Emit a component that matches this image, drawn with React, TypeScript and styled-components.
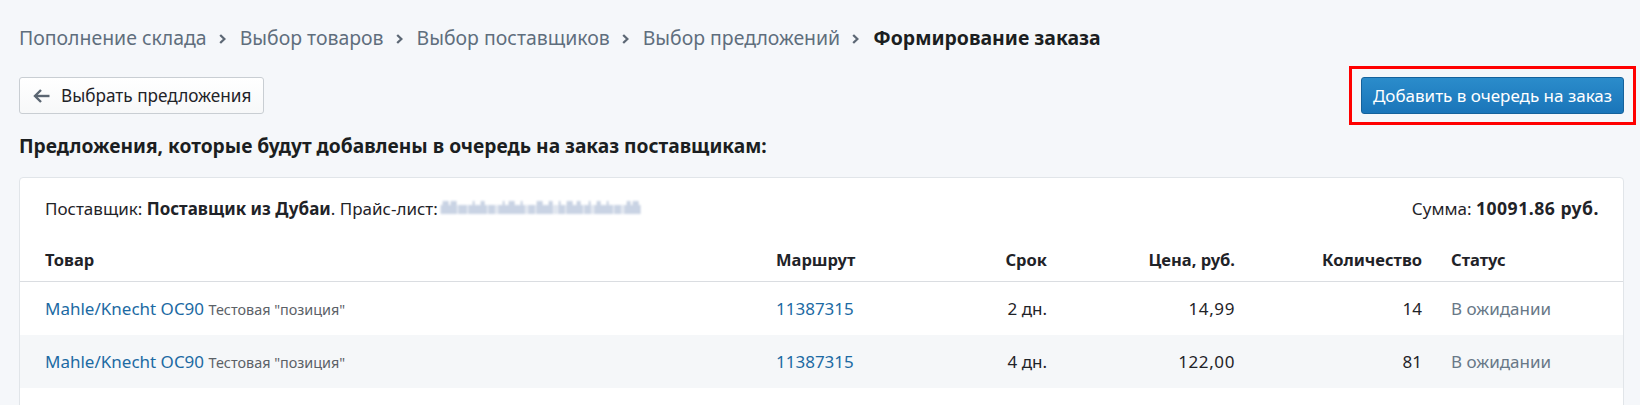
import React from "react";
import styled, { createGlobalStyle } from "styled-components";

const GlobalStyle = createGlobalStyle`
  html, body {
    margin: 0;
    padding: 0;
    background: #f5f7fa;
    font-family: "Noto Sans", "Open Sans", sans-serif;
    color: #212529;
  }
  * { box-sizing: border-box; }
`;

const Page = styled.div`
  padding: 26px 16px 0 19px;
`;

const Breadcrumbs = styled.nav`
  display: flex;
  align-items: center;
  height: 24px;
  font-size: 19.45px;
  line-height: 24px;
`;

const Crumb = styled.a<{ $current?: boolean }>`
  color: ${(p) => (p.$current ? "#1b1e21" : "#5f6e7d")};
  font-weight: ${(p) => (p.$current ? 700 : 400)};
  text-decoration: none;
  white-space: nowrap;
`;

const Sep = styled.span`
  display: inline-flex;
  align-items: center;
  margin: 1px 14px 0 12px;
  color: #5d6875;
`;

const Toolbar = styled.div`
  display: flex;
  justify-content: space-between;
  align-items: center;
  margin-top: 27px;
`;

const BackButton = styled.button`
  display: inline-flex;
  align-items: center;
  gap: 11px;
  height: 37px;
  padding: 0 12px 0 13px;
  border: 1px solid #c9ced3;
  border-radius: 3px;
  background: linear-gradient(#ffffff, #f7f8f9);
  font-family: inherit;
  font-size: 17.2px;
  color: #1f2328;
  cursor: pointer;
`;

const Highlight = styled.div`
  position: relative;
  &::after {
    content: "";
    position: absolute;
    inset: -11px -12px;
    border: 3px solid #ff0000;
    pointer-events: none;
  }
`;

const PrimaryButton = styled.button`
  display: inline-flex;
  align-items: center;
  justify-content: center;
  width: 263px;
  height: 37px;
  border: 1px solid #15629c;
  border-radius: 3px;
  background: linear-gradient(#2b8ccb, #1a75b9);
  color: #ffffff;
  font-family: inherit;
  font-size: 17px;
  cursor: pointer;
`;

const Heading = styled.h2`
  margin: 20px 0 0;
  font-size: 19.2px;
  line-height: 24px;
  font-weight: 700;
  color: #1b1e21;
`;

const Card = styled.section`
  margin-top: 19px;
  background: #ffffff;
  border: 1px solid #e1e5e9;
  border-radius: 4px;
  padding-bottom: 20px;
`;

const SupplierBar = styled.div`
  display: flex;
  justify-content: space-between;
  align-items: center;
  height: 60px;
  padding: 0 24px 0 25px;
  font-size: 17px;
  color: #1f2328;
`;

const Amount = styled.b`
  font-size: 17.6px;
  letter-spacing: 0.5px;
`;

const Redacted = styled.svg`
  display: inline-block;
  vertical-align: middle;
  margin-left: 1px;
  margin-top: -3px;
  filter: blur(1.3px);
`;

const Row = styled.div<{ $head?: boolean; $alt?: boolean }>`
  display: grid;
  grid-template-columns: 702px 124px 118px 159px 158px 1fr;
  column-gap: 29px;
  align-items: center;
  height: ${(p) => (p.$head ? "44px" : "53px")};
  padding: 0 24px 0 25px;
  background: ${(p) => (p.$alt ? "#f5f7f9" : "#ffffff")};
  border-bottom: ${(p) => (p.$head ? "1px solid #dadde1" : "none")};
  font-size: ${(p) => (p.$head ? "16.5px" : "17px")};
  font-weight: ${(p) => (p.$head ? 700 : 400)};
  color: #1f2328;
`;

const Cell = styled.div<{ $right?: boolean; $num?: boolean }>`
  text-align: ${(p) => (p.$right ? "right" : "left")};
  letter-spacing: ${(p) => (p.$num ? "0.6px" : "normal")};
  white-space: nowrap;
`;

const Link = styled.a`
  color: #1c6aa3;
  text-decoration: none;
`;

const Note = styled.span`
  font-size: 14.4px;
  color: #5b6167;
`;

const Status = styled.span`
  color: #687887;
`;

const Chevron = () => (
  <svg width="7" height="10" viewBox="0 0 7 10">
    <polyline points="1.2,1 5.4,5 1.2,9" fill="none" stroke="currentColor" strokeWidth="2.3" />
  </svg>
);

const ArrowLeft = () => (
  <svg width="17" height="14" viewBox="0 0 17 14">
    <line x1="2" y1="7" x2="16.5" y2="7" stroke="#5b6672" strokeWidth="2.4" />
    <polyline points="8,1 2,7 8,13" fill="none" stroke="#5b6672" strokeWidth="2.4" />
  </svg>
);

const bars = Array.from({ length: 100 }, (_, i) => {
  const v = (Math.sin(i * 1.3) + Math.sin(i * 0.41) * 0.9 + Math.sin(i * 2.9) * 0.5 + 2.4) / 4.8;
  return v > 0.6 ? "tall" : v > 0.3 ? "mid" : "low";
});

const RedactedName = () => (
  <Redacted width="206" height="20" viewBox="0 0 206 20">
    {bars.map((b, i) => (
      <rect
        key={i}
        x={2 + i * 2}
        y={b === "tall" ? 3 : 7}
        width="1.2"
        height={b === "tall" ? 13 : 9}
        fill="#7f97bd"
        opacity={b === "low" ? 0.4 : 0.7}
      />
    ))}
  </Redacted>
);

const rows = [
  { route: "11387315", term: "2 дн.", price: "14,99", qty: "14" },
  { route: "11387315", term: "4 дн.", price: "122,00", qty: "81" },
];

const crumbs = ["Пополнение склада", "Выбор товаров", "Выбор поставщиков", "Выбор предложений"];

export default function App() {
  return (
    <>
      <GlobalStyle />
      <Page>
        <Breadcrumbs>
          {crumbs.map((c) => (
            <React.Fragment key={c}>
              <Crumb href="#">{c}</Crumb>
              <Sep>
                <Chevron />
              </Sep>
            </React.Fragment>
          ))}
          <Crumb $current>Формирование заказа</Crumb>
        </Breadcrumbs>

        <Toolbar>
          <BackButton>
            <ArrowLeft />
            Выбрать предложения
          </BackButton>
          <Highlight>
            <PrimaryButton>Добавить в очередь на заказ</PrimaryButton>
          </Highlight>
        </Toolbar>

        <Heading>Предложения, которые будут добавлены в очередь на заказ поставщикам:</Heading>

        <Card>
          <SupplierBar>
            <span>
              Поставщик: <b>Поставщик из Дубаи</b>. Прайс-лист:
              <RedactedName />
            </span>
            <span>
              Сумма: <Amount>10091.86 руб.</Amount>
            </span>
          </SupplierBar>
          <Row $head>
            <Cell>Товар</Cell>
            <Cell>Маршрут</Cell>
            <Cell $right>Срок</Cell>
            <Cell $right>Цена, руб.</Cell>
            <Cell $right>Количество</Cell>
            <Cell>Статус</Cell>
          </Row>
          {rows.map((r, i) => (
            <Row key={i} $alt={i % 2 === 1}>
              <Cell>
                <Link href="#">Mahle/Knecht OC90</Link> <Note>Тестовая "позиция"</Note>
              </Cell>
              <Cell>
                <Link href="#">{r.route}</Link>
              </Cell>
              <Cell $right>{r.term}</Cell>
              <Cell $right $num>
                {r.price}
              </Cell>
              <Cell $right>{r.qty}</Cell>
              <Cell>
                <Status>В ожидании</Status>
              </Cell>
            </Row>
          ))}
        </Card>
      </Page>
    </>
  );
}
